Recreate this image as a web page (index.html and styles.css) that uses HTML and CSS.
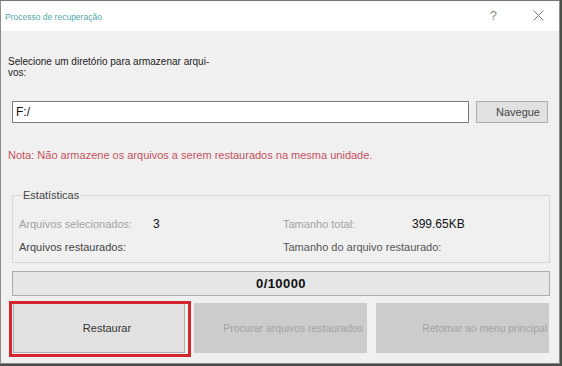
FILE: index.html
```html
<!DOCTYPE html>
<html lang="pt">
<head>
<meta charset="utf-8">
<title>Processo de recuperação</title>
<link rel="stylesheet" href="styles.css">
</head>
<body>
<div class="window">
  <div class="titlebar">
    <span class="title">Processo de recuperação</span>
    <span class="help">?</span>
    <svg class="close" width="11" height="11" viewBox="0 0 11 11"><path d="M0.5 0.5 L10.5 10.5 M10.5 0.5 L0.5 10.5" stroke="#7a7a7a" stroke-width="1" fill="none"/></svg>
  </div>
  <div class="content">
    <div class="prompt">Selecione um diretório para armazenar arqui-<br>vos:</div>
    <div class="pathrow">
      <div class="pathinput">F:/</div>
      <div class="btn browse">Navegue</div>
    </div>
    <div class="note">Nota: Não armazene os arquivos a serem restaurados na mesma unidade.</div>
    <fieldset class="stats">
      <legend>Estatísticas</legend>
      <div class="grid">
        <span class="lbl dim">Arquivos selecionados:</span>
        <span class="val">3</span>
        <span class="lbl dim">Tamanho total:</span>
        <span class="val">399.65KB</span>
        <span class="lbl dark">Arquivos restaurados:</span>
        <span class="val"></span>
        <span class="lbl mid">Tamanho do arquivo restaurado:</span>
        <span class="val"></span>
      </div>
    </fieldset>
    <div class="progress">0/10000</div>
    <div class="actions">
      <div class="btn big primary">Restaurar<span class="highlight"></span></div>
      <div class="btn big disabled second">Procurar arquivos restaurados</div>
      <div class="btn big disabled third">Retomar ao menu principal</div>
    </div>
  </div>
</div>
</body>
</html>
```
FILE: styles.css
```css
html, body {
  margin: 0;
  padding: 0;
}
body {
  background: #4a4f4a;
  width: 562px;
  height: 366px;
  overflow: hidden;
  font-family: "Liberation Sans", Arial, sans-serif;
}
.window {
  box-sizing: border-box;
  width: 560px;
  height: 364px;
  border: 1px solid #8c8c8c;
  border-top-color: #6d7d6a;
  background: #f0f0f0;
  display: flex;
  flex-direction: column;
}
.titlebar {
  height: 30px;
  background: #ffffff;
  display: flex;
  align-items: center;
  position: relative;
}
.title {
  font-size: 8.5px;
  color: #4fa8a8;
  margin-left: 4px;
  margin-top: 2px;
}
.help {
  margin-left: auto;
  font-size: 13px;
  color: #8a8a8a;
  margin-right: 36px;
  margin-top: -1px;
}
.close {
  margin-right: 15px;
  margin-top: -1px;
}
.content {
  flex: 1;
  display: flex;
  flex-direction: column;
  padding: 0 9px 0 11px;
}
.prompt {
  font-size: 10px;
  line-height: 11px;
  color: #222;
  margin-top: 25px;
  margin-left: -4px;
}
.pathrow {
  display: flex;
  margin-top: 23px;
  height: 22px;
}
.pathinput {
  box-sizing: border-box;
  width: 457px;
  height: 22px;
  border: 1px solid #7a7a7a;
  background: #fff;
  font-size: 12px;
  line-height: 20px;
  padding-left: 3px;
  color: #111;
}
.btn {
  box-sizing: border-box;
  border: 1px solid #adadad;
  background: #e1e1e1;
  color: #333;
  font-size: 11px;
  display: flex;
  align-items: center;
  white-space: nowrap;
}
.browse {
  margin-left: 7px;
  width: 72px;
  height: 22px;
  justify-content: flex-end;
  padding-right: 7px;
  color: #444;
}
.note {
  font-size: 11px;
  line-height: 13px;
  color: #c4505c;
  margin-top: 26px;
  margin-left: -4px;
}
.stats {
  margin: 27px 0 0 0;
  padding: 0 0 8px 6px;
  border: 1px solid #d8d8d8;
  min-width: 0;
}
.stats legend {
  font-size: 11px;
  line-height: 13px;
  color: #444;
  padding: 0 1px;
  margin-left: 3px;
}
.grid {
  display: grid;
  grid-template-columns: 134px 130px 129px 1fr;
  grid-auto-rows: 13px;
  row-gap: 10px;
  margin-top: 16px;
  font-size: 11px;
  line-height: 13px;
  white-space: nowrap;
}
.lbl.dim { color: #a2a2a2; }
.lbl.dark { color: #444; }
.lbl.mid { color: #555; }
.val {
  color: #111;
  font-size: 12px;
}
.progress {
  box-sizing: border-box;
  margin-top: 8px;
  height: 25px;
  border: 1px solid #adadad;
  background: #e6e6e6;
  font-size: 13px;
  font-weight: bold;
  letter-spacing: 0.4px;
  color: #111;
  display: flex;
  align-items: center;
  justify-content: center;
}
.actions {
  display: flex;
  margin-top: 7px;
  gap: 9px;
}
.big {
  height: 50px;
  width: 173px;
  justify-content: center;
}
.primary {
  position: relative;
  margin-left: 1px;
  width: 172px;
  padding-left: 16px;
}
.highlight {
  position: absolute;
  left: -5px;
  top: -3px;
  right: -7px;
  bottom: -5px;
  border: 3px solid #d4262c;
}
.disabled {
  background: #cccccc;
  border-color: #cccccc;
  color: #a3a3a3;
  font-size: 10.4px;
}
.second {
  justify-content: flex-end;
  padding-right: 3px;
}
.third {
  justify-content: flex-end;
  padding-right: 1px;
}
```
